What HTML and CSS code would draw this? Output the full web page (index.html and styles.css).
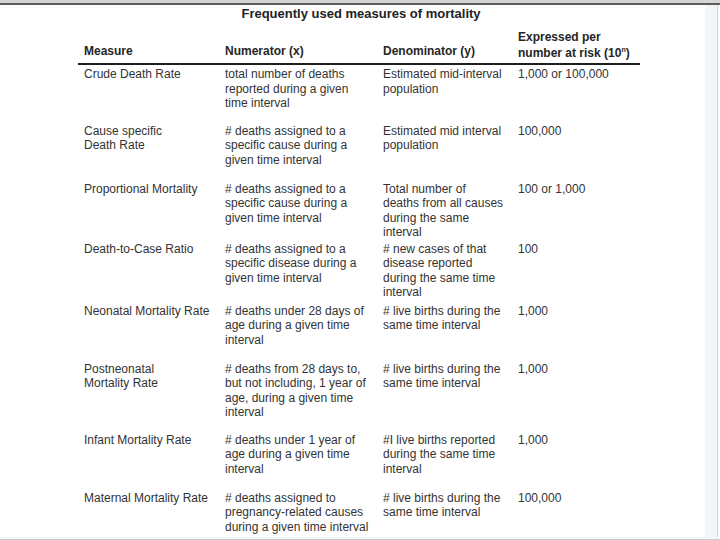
FILE: index.html
```html
<!DOCTYPE html>
<html>
<head>
<meta charset="utf-8">
<link rel="stylesheet" href="styles.css">
</head>
<body>
<div class="screen">
  <div class="topbar"></div>
  <div class="main">
    <div class="sheet">
      <h1 class="title">Frequently used measures of mortality</h1>
      <div class="table">
        <div class="row head">
          <div class="cell">Measure</div>
          <div class="cell">Numerator (x)</div>
          <div class="cell">Denominator (y)</div>
          <div class="cell tall">Expressed per<br>number at risk (10<sup>n</sup>)</div>
        </div>
        <div class="row first gap-13">
          <div class="cell">Crude Death Rate</div>
          <div class="cell">total number of deaths<br>reported during a given<br>time interval</div>
          <div class="cell">Estimated mid-interval<br>population</div>
          <div class="cell">1,000 or 100,000</div>
        </div>
        <div class="row gap-14">
          <div class="cell">Cause specific<br>Death Rate</div>
          <div class="cell"># deaths assigned to a<br>specific cause during a<br>given time interval</div>
          <div class="cell">Estimated mid interval<br>population</div>
          <div class="cell">100,000</div>
        </div>
        <div class="row gap-2">
          <div class="cell">Proportional Mortality</div>
          <div class="cell"># deaths assigned to a<br>specific cause during a<br>given time interval</div>
          <div class="cell">Total number of<br>deaths from all causes<br>during the same<br>interval</div>
          <div class="cell">100 or 1,000</div>
        </div>
        <div class="row gap-4">
          <div class="cell">Death-to-Case Ratio</div>
          <div class="cell"># deaths assigned to a<br>specific disease during a<br>given time interval</div>
          <div class="cell"># new cases of that<br>disease reported<br>during the same time<br>interval</div>
          <div class="cell">100</div>
        </div>
        <div class="row gap-14">
          <div class="cell">Neonatal Mortality Rate</div>
          <div class="cell"># deaths under 28 days of<br>age during a given time<br>interval</div>
          <div class="cell"># live births during the<br>same time interval</div>
          <div class="cell">1,000</div>
        </div>
        <div class="row gap-13">
          <div class="cell">Postneonatal<br>Mortality Rate</div>
          <div class="cell"># deaths from 28 days to,<br>but not including, 1 year of<br>age, during a given time<br>interval</div>
          <div class="cell"># live births during the<br>same time interval</div>
          <div class="cell">1,000</div>
        </div>
        <div class="row gap-14">
          <div class="cell">Infant Mortality Rate</div>
          <div class="cell"># deaths under 1 year of<br>age during a given time<br>interval</div>
          <div class="cell">#I live births reported<br>during the same time<br>interval</div>
          <div class="cell">1,000</div>
        </div>
        <div class="row">
          <div class="cell">Maternal Mortality Rate</div>
          <div class="cell"># deaths assigned to<br>pregnancy-related causes<br>during a given time interval</div>
          <div class="cell"># live births during the<br>same time interval</div>
          <div class="cell">100,000</div>
        </div>
      </div>
    </div>
    <div class="side"></div>
  </div>
  <div class="bottombar"></div>
</div>
</body>
</html>
```
FILE: styles.css
```css
html, body {
  margin: 0;
  padding: 0;
  background: #ffffff;
}

.screen {
  width: 720px;
  height: 540px;
  display: flex;
  flex-direction: column;
  overflow: hidden;
  font-family: "Liberation Sans", Arial, sans-serif;
  color: #333333;
}

.topbar {
  height: 3px;
  background: #d4d4d4;
  border-bottom: 2px solid #5c5c5c;
  flex: none;
}

.main {
  flex: 1;
  display: flex;
  min-height: 0;
}

.sheet {
  flex: 1;
  padding-left: 78px;
}

.side {
  width: 12px;
  flex: none;
  background: #f1f7f9;
  border-right: 1px solid #c9d5db;
  margin-right: 2px;
}

.bottombar {
  height: 2px;
  flex: none;
  background: #f1f7f9;
  border-bottom: 1px solid #c3ced4;
}

.title {
  margin: 1px 0 0 0;
  width: 566px;
  text-align: center;
  font-size: 13px;
  line-height: 16px;
  font-weight: bold;
  color: #222;
  letter-spacing: 0;
}

.table {
  width: 562px;
  margin-top: 7px;
}

.row {
  display: grid;
  grid-template-columns: 147px 158px 135px 122px;
  font-size: 12px;
  line-height: 14.5px;
}

.cell {
  padding-left: 6px;
}

.cell + .cell {
  padding-left: 0;
}

.head {
  align-items: end;
  font-weight: bold;
  line-height: 16px;
  padding-bottom: 4px;
  border-bottom: 2px solid #1e1e1e;
  color: #262626;
}

.head .tall {
  padding-bottom: 0;
  margin-bottom: -2px;
}

.head sup {
  font-size: 7px;
  line-height: 0;
  vertical-align: 5px;
}

.first {
  padding-top: 2px;
}

.gap-2 { padding-bottom: 2px; }
.gap-4 { padding-bottom: 4px; }
.gap-13 { padding-bottom: 13px; }
.gap-14 { padding-bottom: 14.5px; }
```
